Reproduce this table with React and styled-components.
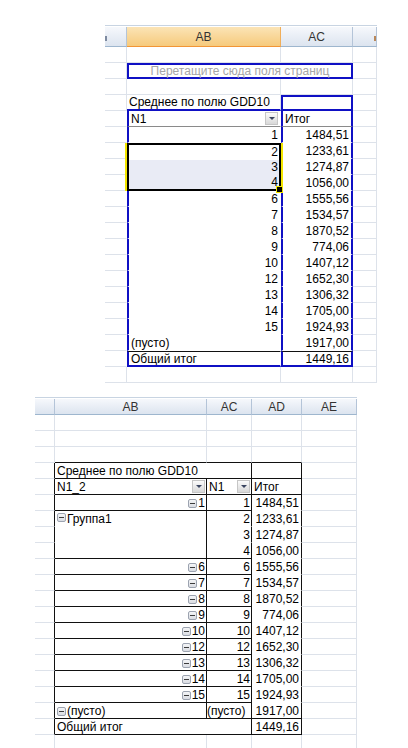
import styled, { createGlobalStyle } from "styled-components";

const BLUE = "#0f10c4";
const GRID = "#dde2ea";
const G = `1px solid ${GRID}`;
const NB = "1px solid transparent";
const B2 = `2px solid ${BLUE}`;
const K = "1px solid #111";
const HDR = "1px solid #8a8a8a";

const GlobalStyle = createGlobalStyle`
  html, body {
    margin: 0;
    padding: 0;
    background: #fff;
  }
  body {
    width: 408px;
    height: 748px;
    overflow: hidden;
    font-family: "Liberation Sans", Arial, sans-serif;
  }
`;

const Page = styled.div`
  display: flex;
  flex-direction: column;
  align-items: flex-start;
`;

const Sheet = styled.div`
  display: grid;
  grid-template-columns: ${(p) => p.$cols};
  grid-template-rows: ${(p) => p.$head}px;
  grid-auto-rows: 16px;
  margin: ${(p) => p.$mt}px 0 0 ${(p) => p.$ml}px;
  border-top: 1px solid #c8d4e2;
  padding-top: 1px;
  font-size: 12px;
  color: #000;
`;

const Head = styled.div`
  box-sizing: border-box;
  min-width: 0;
  display: flex;
  align-items: center;
  justify-content: ${(p) => p.$justify || "center"};
  overflow: hidden;
  white-space: nowrap;
  color: #333;
  background: ${(p) =>
    p.$active
      ? "linear-gradient(#fbe4b6, #f6ca7c)"
      : "linear-gradient(#f6f8fc, #dce4ef)"};
  border-right: 1px solid ${(p) => (p.$active ? "#f0ae5a" : "#b4c4d8")};
  border-bottom: 1px solid ${(p) => (p.$active ? "#f29536" : "#9eb6ce")};
`;

/* sliver of a clipped column letter at the screenshot's edge */
const HeadMark = styled.span`
  flex: none;
  width: 2px;
  height: 5px;
  margin: 3px ${(p) => (p.$right ? "0 0 20px" : "0 0 0")};
  background: ${(p) => (p.$right ? "#b8875a" : "#7d8aa0")};
`;

const Cell = styled.div`
  box-sizing: border-box;
  min-width: 0;
  display: flex;
  align-items: ${(p) => (p.$top ? "flex-start" : "center")};
  justify-content: ${(p) => (p.$align === "right" ? "flex-end" : "flex-start")};
  grid-column: span ${(p) => p.$span || 1};
  grid-row: span ${(p) => p.$rows || 1};
  padding: ${(p) => (p.$top ? "1px" : "0")} ${(p) => p.$pr ?? 2}px 0
    ${(p) => p.$pl ?? 2}px;
  background: #fff;
  border-top: ${(p) => p.$t || "none"};
  border-left: ${(p) => p.$l || "none"};
  border-right: ${(p) => p.$r || G};
  border-bottom: ${(p) => p.$b || G};
  white-space: nowrap;
  overflow: hidden;
  line-height: 14px;
`;

const DropZone = styled.div`
  grid-column: span 2;
  box-sizing: border-box;
  display: flex;
  align-items: center;
  justify-content: center;
  border: 2px solid ${BLUE};
  background: #fff;
  color: #a6a6a6;
  white-space: nowrap;
`;

const DropButton = styled.span`
  flex: none;
  margin-left: auto;
  width: 13px;
  height: 13px;
  box-sizing: border-box;
  border: 1px solid #c6c6c6;
  background: linear-gradient(#fbfbfb, #d8d8d8);
  display: flex;
  align-items: center;
  justify-content: center;
  &::after {
    content: "";
    border-left: 3px solid transparent;
    border-right: 3px solid transparent;
    border-top: 3px solid #3a4560;
  }
`;

const Toggle = styled.span`
  flex: none;
  width: 9px;
  height: 9px;
  box-sizing: border-box;
  margin: 1px 1px 0 0;
  border: 1px solid #9ca3b0;
  border-radius: 2px;
  background: linear-gradient(#f4f5f7, #d9dce2);
  display: inline-flex;
  align-items: center;
  justify-content: center;
  &::after {
    content: "";
    width: 5px;
    height: 1px;
    background: #3c3c3c;
  }
`;

const Selection = styled.div`
  grid-row: span 3;
  position: relative;
  z-index: 1;
  box-sizing: border-box;
  display: grid;
  grid-template-rows: repeat(3, 1fr);
  border: 2px solid #000;
  box-shadow: -2px 0 0 #f3e600, 2px 0 0 #f3e600;
`;

const SelRow = styled.div`
  display: flex;
  align-items: center;
  justify-content: flex-end;
  padding-right: 1px;
  background: ${(p) => (p.$fill ? "#e9ebf5" : "#fff")};
  line-height: 14px;
`;

const FillHandle = styled.span`
  position: absolute;
  right: -4px;
  bottom: -4px;
  width: 5px;
  height: 5px;
  background: #000;
  border: 1px solid #f3e600;
`;

const firstRows = [
  ["1", "1484,51"],
  ["6", "1555,56"],
  ["7", "1534,57"],
  ["8", "1870,52"],
  ["9", "774,06"],
  ["10", "1407,12"],
  ["12", "1652,30"],
  ["13", "1306,32"],
  ["14", "1705,00"],
  ["15", "1924,93"],
];

function Blank({ n }) {
  return Array.from({ length: n }, (_, i) => <Cell key={i} />);
}

function BlueRow({ n, v, left }) {
  return (
    <>
      <Cell $r={NB} />
      <Cell $align={left ? "left" : "right"} $l={B2} $r={NB} $b={NB}>
        {n}
      </Cell>
      <Cell $align="right" $l={B2} $r={B2} $b={NB}>
        {v}
      </Cell>
      <Cell />
    </>
  );
}

function OutlineRow({ label, n, v, closing }) {
  return (
    <>
      <Cell $r={K} />
      <Cell $align="right" $r={K} $b={K} $pr={1}>
        <Toggle />
        {label}
      </Cell>
      <Cell $align="right" $r={K} $b={K} $pr={1}>
        {n}
      </Cell>
      <Cell $align="right" $r={K} $b={closing ? K : NB} $pr={2}>
        {v}
      </Cell>
      <Cell />
    </>
  );
}

function FirstSheet() {
  return (
    <Sheet $cols="22px 154px 72px 24px" $head={20} $mt={25} $ml={105}>
      <Head $justify="flex-start">
        <HeadMark />
      </Head>
      <Head $active>AB</Head>
      <Head>AC</Head>
      <Head $justify="flex-end">
        <HeadMark $right />
      </Head>

      <Blank n={4} />
      <Cell />
      <DropZone>Перетащите сюда поля страниц</DropZone>
      <Cell />
      <Blank n={4} />

      <Cell />
      <Cell $b={B2}>Среднее по полю GDD10</Cell>
      <Cell $t={B2} $l={B2} $r={B2} $b={B2} />
      <Cell />

      <Cell $r={NB} />
      <Cell $l={B2} $r={NB} $b={HDR}>
        N1
        <DropButton />
      </Cell>
      <Cell $l={B2} $r={B2} $b={HDR}>
        Итог
      </Cell>
      <Cell />

      <BlueRow n={firstRows[0][0]} v={firstRows[0][1]} />

      <Cell $r={NB} />
      <Selection>
        <SelRow>2</SelRow>
        <SelRow $fill>3</SelRow>
        <SelRow $fill>4</SelRow>
        <FillHandle />
      </Selection>
      <Cell $align="right" $l={B2} $r={B2} $b={NB}>
        1233,61
      </Cell>
      <Cell />
      <Cell $r={NB} />
      <Cell $align="right" $l={B2} $r={B2} $b={NB}>
        1274,87
      </Cell>
      <Cell />
      <Cell $r={NB} />
      <Cell $align="right" $l={B2} $r={B2} $b={NB}>
        1056,00
      </Cell>
      <Cell />

      {firstRows.slice(1).map(([n, v]) => (
        <BlueRow key={n} n={n} v={v} />
      ))}
      <BlueRow n="(пусто)" v="1917,00" left />

      <Cell $r={NB} />
      <Cell $t={K} $l={B2} $r={NB} $b={B2}>
        Общий итог
      </Cell>
      <Cell $align="right" $t={K} $l={B2} $r={B2} $b={B2}>
        1449,16
      </Cell>
      <Cell />

      <Blank n={4} />
    </Sheet>
  );
}

function SecondSheet() {
  return (
    <Sheet $cols="20px 152px 45px 50px 55px" $head={16} $mt={14} $ml={35}>
      <Head />
      <Head>AB</Head>
      <Head>AC</Head>
      <Head>AD</Head>
      <Head>AE</Head>

      <Blank n={5} />
      <Blank n={5} />
      <Cell />
      <Cell $b={K} />
      <Cell $b={K} />
      <Cell $b={K} />
      <Cell />

      <Cell $r={K} />
      <Cell $span={2} $r={K} $b={K}>
        Среднее по полю GDD10
      </Cell>
      <Cell $r={K} $b={K} />
      <Cell />

      <Cell $r={K} />
      <Cell $r={K} $b={K} $pr={1}>
        N1_2
        <DropButton />
      </Cell>
      <Cell $r={K} $b={K} $pr={1}>
        N1
        <DropButton />
      </Cell>
      <Cell $r={K} $b={K}>
        Итог
      </Cell>
      <Cell />

      <OutlineRow label="1" n="1" v="1484,51" />

      <Cell $r={K} />
      <Cell $rows={3} $top $r={K} $b={K}>
        <Toggle />
        Группа1
      </Cell>
      <Cell $align="right" $r={K} $b={NB} $pr={1}>
        2
      </Cell>
      <Cell $align="right" $r={K} $b={NB}>
        1233,61
      </Cell>
      <Cell />
      <Cell $r={K} />
      <Cell $align="right" $r={K} $b={NB} $pr={1}>
        3
      </Cell>
      <Cell $align="right" $r={K} $b={NB}>
        1274,87
      </Cell>
      <Cell />
      <Cell $r={K} />
      <Cell $align="right" $r={K} $b={K} $pr={1}>
        4
      </Cell>
      <Cell $align="right" $r={K} $b={NB}>
        1056,00
      </Cell>
      <Cell />

      {firstRows.slice(1).map(([n, v]) => (
        <OutlineRow key={n} label={n} n={n} v={v} />
      ))}

      <Cell $r={K} />
      <Cell $r={K} $b={K}>
        <Toggle />
        (пусто)
      </Cell>
      <Cell $r={K} $b={K} $pl={0}>
        (пусто)
      </Cell>
      <Cell $align="right" $r={K} $b={K}>
        1917,00
      </Cell>
      <Cell />

      <Cell $r={K} />
      <Cell $span={2} $r={K} $b={K}>
        Общий итог
      </Cell>
      <Cell $align="right" $r={K} $b={K}>
        1449,16
      </Cell>
      <Cell />

      <Blank n={5} />
    </Sheet>
  );
}

export default function App() {
  return (
    <Page>
      <GlobalStyle />
      <FirstSheet />
      <SecondSheet />
    </Page>
  );
}
